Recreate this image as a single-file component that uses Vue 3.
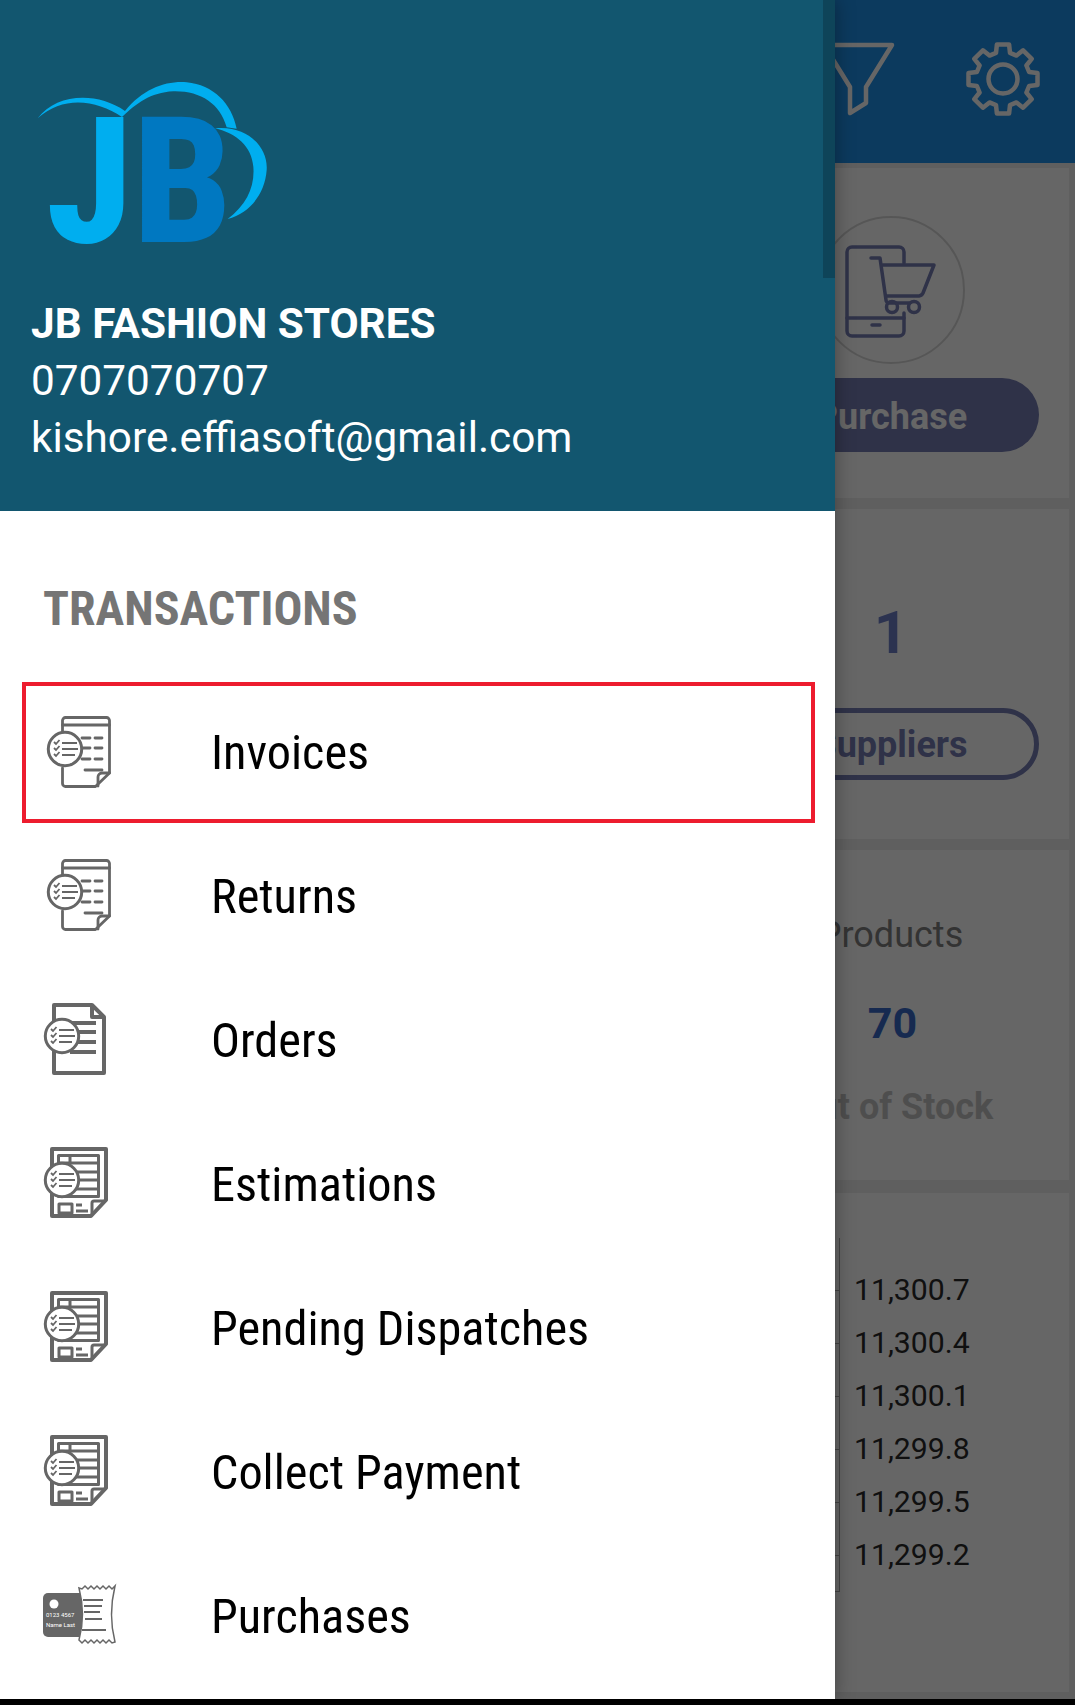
<template>
  <div class="tela">
    <!-- conteudo atras do menu -->
    <div class="dashboard">
      <header class="topo">
        <svg class="ico-filtro" viewBox="0 0 80 80" width="80" height="80">
          <path d="M4 6 H72 L46 48 V64 L30 74 V48 Z" />
        </svg>
        <svg class="ico-engrenagem" viewBox="0 0 80 80" width="80" height="80">
          <path :d="engrenagem" />
          <circle cx="40" cy="40" r="14.5" />
        </svg>
      </header>

      <section class="card card-compra">
        <div class="coluna">
          <svg class="ico-compra" viewBox="0 0 148 148" width="148" height="148">
            <circle class="aro" cx="74" cy="74" r="73" />
            <path class="traco" d="M87 47 V36 a5 5 0 0 0 -5 -5 H35 a5 5 0 0 0 -5 5 V115 a5 5 0 0 0 5 5 H82 a5 5 0 0 0 5 -5 V97" />
            <path class="traco" d="M30 102 H87 M55 109 H63" />
            <path class="traco" d="M54 42 H63 L69 84 a3 3 0 0 0 3 3 H92 M66 49 H117 L106 77 a5 5 0 0 1 -4 3 H69" />
            <circle class="traco" cx="75" cy="91" r="5.5" />
            <circle class="traco" cx="97" cy="91" r="5.5" />
          </svg>
          <button class="pilula cheia">Purchase</button>
        </div>
      </section>

      <section class="card card-fornecedor">
        <div class="coluna">
          <div class="numero">1</div>
          <button class="pilula vazada">Suppliers</button>
        </div>
      </section>

      <section class="card card-produtos">
        <div class="coluna">
          <div class="rotulo">Products</div>
          <div class="qtd">70</div>
          <div class="estoque">Out of Stock</div>
        </div>
      </section>

      <section class="card card-grafico">
        <div class="plot">
          <div v-for="v in eixo" :key="v" class="tick"></div>
        </div>
        <div class="eixo">
          <div v-for="v in eixo" :key="v">{{ v }}</div>
        </div>
      </section>
    </div>

    <div class="escurecer"></div>

    <aside class="menu">
      <div class="menu-topo">
        <svg class="logo" viewBox="0 0 900 720" width="300" height="240">
          <path class="nuvem" d="M113 205 C170 130 290 125 375 183 C430 115 500 92 560 97 C640 105 695 160 710 236 L680 232 C660 160 600 122 520 124 C450 128 410 160 366 201 C290 150 190 135 113 205 Z" />
          <path class="nuvem" d="M645 235 C740 225 805 290 800 360 C795 430 750 490 683 507 C740 465 765 410 760 350 C755 290 710 250 645 235 Z" />
          <text class="letra-j" x="138" y="575">J</text>
          <text class="letra-b" x="398" y="575">B</text>
        </svg>
        <div class="loja">JB FASHION STORES</div>
        <div class="dado">0707070707</div>
        <div class="dado">kishore.effiasoft@gmail.com</div>
      </div>
      <div class="barra"></div>

      <div class="menu-corpo">
        <h2>TRANSACTIONS</h2>
        <div v-for="(item, i) in itens" :key="item.nome" class="item" :class="{ ativo: i === 0 }">
          <svg class="item-ico" viewBox="0 0 90 90" width="90" height="90">
            <g v-if="item.tipo === 'fatura'" class="fino">
              <path d="M22.5 23 V12.5 a3 3 0 0 1 3 -3 H66.5 a3 3 0 0 1 3 3 V65 L55.5 78.5 H25.5 a3 3 0 0 1 -3 -3 V60" />
              <path d="M22.5 17 H69.5 M42 30 H50 M55 30 H62 M42 40 H50 M55 40 H62 M42 51 H50 M55 51 H62 M45 62 H62" />
              <path d="M69.5 65 H62 a4 4 0 0 0 -4 4 V78" />
            </g>
            <g v-if="item.tipo === 'pedido'" class="grosso">
              <path d="M52 10 H14 V78 H64 V22 Z" />
              <path d="M52 10 V22 H64 M30 28 H56 M30 37 H56 M30 47 H56 M30 57 H56" />
            </g>
            <g v-if="item.tipo === 'estimativa'" class="grosso">
              <path d="M12 10 H66 V61 L51 77 H12 Z" />
              <path class="medio" d="M18.5 16.5 H58.5 V57.5 H18.5 Z M18.5 24 H58.5 M18.5 33 H58.5 M18.5 41 H58.5 M18.5 50 H58.5 M30 16.5 V24" />
              <path class="medio" d="M19 65 H32 V74 H19 Z M36 66 H42 M36 72 H48 M66 62 H54 a2 2 0 0 0 -2 2 V76" />
            </g>
            <g v-if="item.tipo !== 'cartao'">
              <circle class="balao" :cx="item.tipo === 'fatura' ? 25 : 22" cy="41" r="16.7" />
              <g :transform="item.tipo === 'fatura' ? 'translate(3 0)' : ''" class="lista">
                <path d="M11 34 l2 2 l3.5 -4 M11 40 l2 2 l3.5 -4 M11 46 l2 2 l3.5 -4" />
                <path d="M19 35 H34 M19 41 H35 M19 47 H32" />
              </g>
            </g>
            <g v-if="item.tipo === 'cartao'">
              <rect x="3" y="22" width="46" height="44" rx="5" fill="#666" />
              <circle cx="14" cy="33" r="4.5" fill="#fff" />
              <text class="cartao-txt" x="6" y="46">0123 4567</text>
              <text class="cartao-txt" x="6" y="56">Name Last</text>
              <path class="recibo" :d="recibo" />
              <path class="recibo-linha" d="M43 29 H63 M44 35 H62 M44 41 H60 M45 48 H62 M42 59 H66" />
            </g>
          </svg>
          <span class="item-nome">{{ item.nome }}</span>
        </div>
      </div>
    </aside>
  </div>
</template>

<script setup>
const eixo = ['11,300.7', '11,300.4', '11,300.1', '11,299.8', '11,299.5', '11,299.2']

const itens = [
  { nome: 'Invoices', tipo: 'fatura' },
  { nome: 'Returns', tipo: 'fatura' },
  { nome: 'Orders', tipo: 'pedido' },
  { nome: 'Estimations', tipo: 'estimativa' },
  { nome: 'Pending Dispatches', tipo: 'estimativa' },
  { nome: 'Collect Payment', tipo: 'estimativa' },
  { nome: 'Purchases', tipo: 'cartao' }
]

// engrenagem de 8 dentes, calculada em volta do centro
const ponto = (ang, r) => {
  const a = (ang * Math.PI) / 180
  return `${(40 + r * Math.cos(a)).toFixed(1)} ${(40 + r * Math.sin(a)).toFixed(1)}`
}
const montarEngrenagem = () => {
  let d = ''
  for (let i = 0; i < 8; i++) {
    const c = i * 45 - 90
    d += `${i ? 'L' : 'M'}${ponto(c - 10, 35)} L${ponto(c + 10, 35)} L${ponto(c + 15, 27)} L${ponto(c + 30, 27)} `
  }
  return d + 'Z'
}
const engrenagem = montarEngrenagem()

// recibo com as bordas serrilhadas
const montarRecibo = () => {
  let topo = 'M39 17 '
  for (let x = 42; x <= 75; x += 3) topo += `L${x} ${x % 2 ? 15 : 18} `
  let base = 'Q68 44 75 71 '
  for (let x = 72; x >= 39; x -= 3) base += `L${x} ${x % 2 ? 69 : 72} `
  return topo + base + 'Q46 44 39 17 Z'
}
const recibo = montarRecibo()
</script>

<style scoped>
.tela {
  position: relative;
  width: 1075px;
  height: 1705px;
  overflow: hidden;
  background: #000;
  font-family: Roboto, "Liberation Sans", sans-serif;
}

.dashboard {
  height: 1699px;
  background: #eee;
}

.topo {
  height: 163px;
  background: #1e91eb;
  display: flex;
  justify-content: flex-end;
  padding-right: 32px;
  padding-top: 39px;
  gap: 63px;
  box-sizing: border-box;
}

.ico-filtro path,
.ico-engrenagem path,
.ico-engrenagem circle {
  fill: none;
  stroke: #fff;
  stroke-width: 4.5;
  stroke-linejoin: round;
}

.card {
  background: #fff;
  margin-right: 6px;
  display: flex;
  justify-content: flex-end;
}

.coluna {
  width: 356px;
  display: flex;
  flex-direction: column;
  align-items: center;
}

.card-compra {
  height: 330px;
  margin-top: 5px;
  padding-top: 48px;
  box-sizing: border-box;
}

.card-fornecedor {
  height: 330px;
  margin-top: 11px;
  padding-top: 94px;
  box-sizing: border-box;
}

.card-produtos {
  height: 330px;
  margin-top: 11px;
  padding-top: 63px;
  box-sizing: border-box;
}

.card-grafico {
  height: 499px;
  margin-top: 13px;
  padding-top: 45px;
  box-sizing: border-box;
  justify-content: flex-start;
}

.aro {
  fill: none;
  stroke: #d8d8d8;
  stroke-width: 2;
}

.traco {
  fill: none;
  stroke: #757db4;
  stroke-width: 3.5;
  stroke-linecap: round;
  stroke-linejoin: round;
}

.pilula {
  width: 296px;
  border-radius: 37px;
  font: 700 36px Roboto, sans-serif;
  box-sizing: border-box;
}

.cheia {
  height: 74px;
  margin-top: 14px;
  padding: 3px 0 0;
  background: #757db4;
  border: none;
  color: #fff;
}

.vazada {
  height: 72px;
  margin-top: 45px;
  padding: 2px 0 0;
  background: #fff;
  border: 5px solid #757db4;
  color: #757db4;
}

.numero {
  font-size: 60px;
  font-weight: 700;
  line-height: 60px;
  color: #6e7fc8;
}

.rotulo {
  font-size: 36px;
  line-height: 44px;
  color: #808080;
}

.qtd {
  font-size: 43px;
  font-weight: 700;
  line-height: 52px;
  margin-top: 40px;
  padding-left: 3px;
  color: #3969c8;
}

.estoque {
  font-size: 36px;
  font-weight: 700;
  line-height: 44px;
  margin-top: 36px;
  padding-left: 4px;
  color: #c4c4c4;
}

.plot {
  width: 840px;
  height: 354px;
  box-sizing: border-box;
  border-right: 1px solid #aaa;
  border-bottom: 1px solid #aaa;
}

.tick {
  height: 53px;
  margin-left: 820px;
  box-sizing: border-box;
  border-bottom: 1px solid #aaa;
}

.eixo {
  margin-left: 14px;
  padding-top: 25px;
  font-size: 30.2px;
  line-height: 53px;
  color: #2a2a2a;
}

.escurecer {
  position: absolute;
  inset: 0 0 6px 0;
  background: rgba(0, 0, 0, 0.6);
}

.menu {
  position: absolute;
  left: 0;
  top: 0;
  width: 835px;
  height: 1699px;
  background: #fff;
  box-shadow: 0 0 18px rgba(0, 0, 0, 0.35);
}

.menu-topo {
  height: 511px;
  background: #12566f;
  box-sizing: border-box;
  padding: 50px 0 0 31px;
  color: #fff;
}

.logo {
  display: block;
  margin-left: -31px;
}

.logo text {
  font-family: Roboto, sans-serif;
  font-weight: 800;
  font-size: 528px;
  font-stretch: condensed;
}

.nuvem,
.letra-j {
  fill: #00aeef;
}

.letra-b {
  fill: #0078c1;
}

.loja {
  font-size: 42.3px;
  font-weight: 700;
  line-height: 57px;
  margin-top: 5px;
}

.dado {
  font-size: 42.3px;
  line-height: 57px;
}

.barra {
  position: absolute;
  right: 0;
  top: 0;
  width: 12px;
  height: 278px;
  background: #0e4459;
}

.menu-corpo h2 {
  height: 169px;
  margin: 0;
  padding: 70px 0 0 43px;
  box-sizing: border-box;
  font-size: 48px;
  line-height: 56px;
  font-weight: 700;
  color: #757575;
  font-stretch: condensed;
}

.item {
  height: 144px;
  display: flex;
  align-items: center;
  padding-left: 40px;
  box-sizing: border-box;
}

.ativo {
  height: 141px;
  margin: 2px 20px 1px 22px;
  padding-left: 14px;
  border: 4px solid #ed1c2e;
}

.item-ico {
  flex: none;
}

.item-nome {
  margin-left: 81px;
  font-size: 48.3px;
  font-stretch: condensed;
  color: #000;
  white-space: nowrap;
}

.fino path {
  fill: none;
  stroke: #666;
  stroke-width: 2.8;
  stroke-linejoin: round;
  stroke-linecap: round;
}

.grosso path {
  fill: none;
  stroke: #666;
  stroke-width: 4;
  stroke-linejoin: round;
}

.grosso .medio {
  stroke-width: 3;
}

.balao {
  fill: #fff;
  stroke: #666;
  stroke-width: 3;
}

.lista path {
  fill: none;
  stroke: #666;
  stroke-width: 1.8;
}

.cartao-txt {
  font-size: 6px;
  fill: #fff;
}

.recibo {
  fill: #fff;
  stroke: #666;
  stroke-width: 1.5;
}

.recibo-linha {
  fill: none;
  stroke: #666;
  stroke-width: 1.8;
}
</style>

<style>
body {
  background: #000;
}
</style>
